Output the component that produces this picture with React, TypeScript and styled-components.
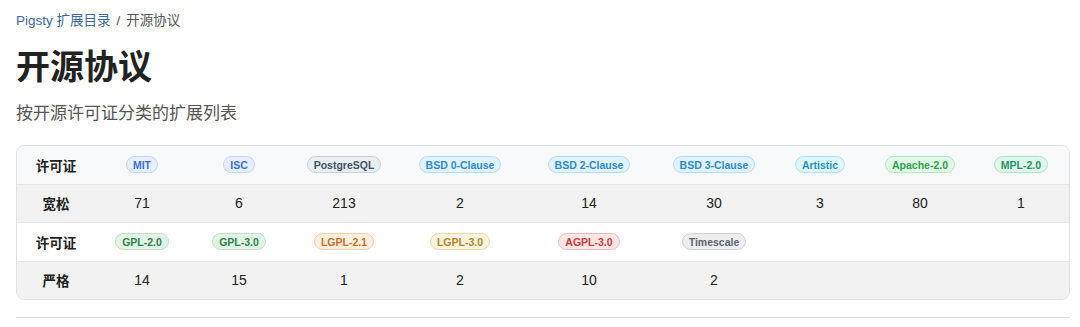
import styled, { createGlobalStyle } from 'styled-components'

const GlobalStyle = createGlobalStyle`
  html, body {
    margin: 0;
    padding: 0;
    background: #ffffff;
    font-family: "Liberation Sans", "Noto Sans CJK SC", sans-serif;
    color: #222222;
  }
`

type Tone =
  | 'blue'
  | 'slate'
  | 'sky'
  | 'cyan'
  | 'green'
  | 'emerald'
  | 'forest'
  | 'orange'
  | 'amber'
  | 'red'
  | 'gray'

const tones: Record<Tone, { bg: string; border: string; fg: string }> = {
  blue: { bg: '#e7efff', border: '#c3d5fa', fg: '#3a6fd8' },
  slate: { bg: '#e9eef3', border: '#c6d0da', fg: '#3f5266' },
  sky: { bg: '#e2f2fc', border: '#b5dcf3', fg: '#2a8dca' },
  cyan: { bg: '#dff5fb', border: '#ade2ef', fg: '#1e98b6' },
  green: { bg: '#e3f8e9', border: '#b4e6c2', fg: '#2aa64a' },
  emerald: { bg: '#e0f5ec', border: '#b1e2ca', fg: '#259468' },
  forest: { bg: '#e4f3e8', border: '#bcdfc6', fg: '#2a8747' },
  orange: { bg: '#fdf0e1', border: '#f2cfa3', fg: '#c86f1f' },
  amber: { bg: '#fcf4e2', border: '#edd7a4', fg: '#b5861f' },
  red: { bg: '#fde7e7', border: '#f4b8b8', fg: '#cf3a3a' },
  gray: { bg: '#eceef1', border: '#cdd2d8', fg: '#5e6570' },
}

const Page = styled.div`
  padding: 12px 10px 0 16px;
`

const Breadcrumb = styled.div`
  font-size: 13.5px;
  line-height: 18px;
  color: #555555;
`

const Crumb = styled.span`
  color: #3d6a98;
`

const Sep = styled.span`
  margin: 0 6px;
  color: #555555;
`

const Title = styled.h1`
  margin: 17px 0 0;
  font-size: 34px;
  line-height: 40px;
  font-weight: 700;
  color: #222222;
`

const Lead = styled.p`
  margin: 15px 0 0;
  font-size: 17px;
  line-height: 24px;
  color: #555555;
`

const TableWrap = styled.div`
  margin-top: 19px;
  border: 1px solid #e2e2e2;
  border-radius: 8px;
  overflow: hidden;
`

const Table = styled.table`
  width: 100%;
  border-collapse: collapse;
  table-layout: fixed;
`

const Row = styled.tr<{ $bg: string }>`
  background: ${({ $bg }) => $bg};
  border-top: 1px solid #e6e6e6;
  &:first-child {
    border-top: none;
  }
`

const Cell = styled.td`
  height: 37.5px;
  padding: 0;
  text-align: center;
  vertical-align: middle;
  font-size: 14px;
  color: #222222;
`

const Label = styled(Cell)`
  font-weight: 700;
  font-size: 13.5px;
`

const Badge = styled.span<{ $tone: Tone }>`
  display: inline-block;
  height: 17px;
  line-height: 16px;
  padding: 0 6px;
  box-sizing: border-box;
  border-radius: 9px;
  font-size: 10.5px;
  font-weight: 700;
  background: ${({ $tone }) => tones[$tone].bg};
  border: 1px solid ${({ $tone }) => tones[$tone].border};
  color: ${({ $tone }) => tones[$tone].fg};
`

const Rule = styled.hr`
  margin: 17px 0 0;
  border: none;
  border-top: 1px solid #dddddd;
`

const widths = [78, 94, 100, 110, 122, 136, 114, 98, 102, 100]

type License = { name: string; tone: Tone; count: number }

const permissive: License[] = [
  { name: 'MIT', tone: 'blue', count: 71 },
  { name: 'ISC', tone: 'blue', count: 6 },
  { name: 'PostgreSQL', tone: 'slate', count: 213 },
  { name: 'BSD 0-Clause', tone: 'sky', count: 2 },
  { name: 'BSD 2-Clause', tone: 'sky', count: 14 },
  { name: 'BSD 3-Clause', tone: 'sky', count: 30 },
  { name: 'Artistic', tone: 'cyan', count: 3 },
  { name: 'Apache-2.0', tone: 'green', count: 80 },
  { name: 'MPL-2.0', tone: 'emerald', count: 1 },
]

const strict: License[] = [
  { name: 'GPL-2.0', tone: 'forest', count: 14 },
  { name: 'GPL-3.0', tone: 'forest', count: 15 },
  { name: 'LGPL-2.1', tone: 'orange', count: 1 },
  { name: 'LGPL-3.0', tone: 'amber', count: 2 },
  { name: 'AGPL-3.0', tone: 'red', count: 10 },
  { name: 'Timescale', tone: 'gray', count: 2 },
]

const pad = (list: License[]) => Array.from({ length: 9 }, (_, i) => list[i])

const LicenseGroup = ({ title, list, headBg }: { title: string; list: License[]; headBg: string }) => (
  <>
    <Row $bg={headBg}>
      <Label>许可证</Label>
      {pad(list).map((l, i) => (
        <Cell key={i}>{l && <Badge $tone={l.tone}>{l.name}</Badge>}</Cell>
      ))}
    </Row>
    <Row $bg="#f2f2f2">
      <Label>{title}</Label>
      {pad(list).map((l, i) => (
        <Cell key={i}>{l ? l.count : ''}</Cell>
      ))}
    </Row>
  </>
)

export default function App() {
  return (
    <>
      <GlobalStyle />
      <Page>
        <Breadcrumb>
          <Crumb>Pigsty 扩展目录</Crumb>
          <Sep>/</Sep>
          开源协议
        </Breadcrumb>
        <Title>开源协议</Title>
        <Lead>按开源许可证分类的扩展列表</Lead>
        <TableWrap>
          <Table>
            <colgroup>
              {widths.map((w, i) => (
                <col key={i} style={{ width: w }} />
              ))}
            </colgroup>
            <tbody>
              <LicenseGroup title="宽松" list={permissive} headBg="#f8f9fa" />
              <LicenseGroup title="严格" list={strict} headBg="#ffffff" />
            </tbody>
          </Table>
        </TableWrap>
        <Rule />
      </Page>
    </>
  )
}
